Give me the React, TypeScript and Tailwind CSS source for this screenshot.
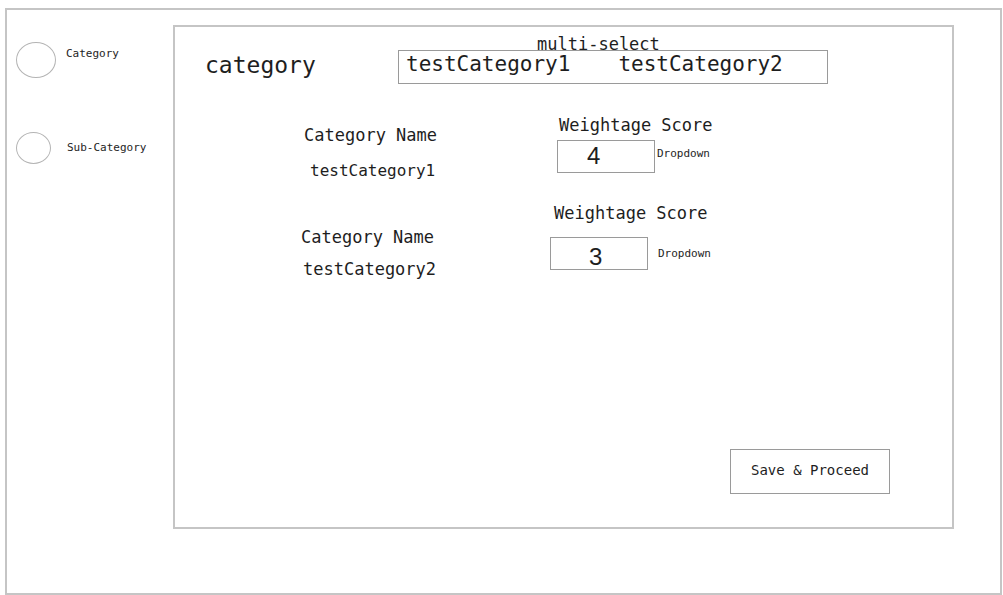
import { useState } from "react";

const SCORES = ["1", "2", "3", "4", "5"];

function ScoreSelect({
  id,
  initial,
  className,
}: {
  id: string;
  initial: string;
  className: string;
}) {
  const [value, setValue] = useState(initial);
  return (
    <select
      id={id}
      value={value}
      onChange={(event) => setValue(event.target.value)}
      className={`h-[33px] w-[98px] appearance-none border border-[#9a9a9a] bg-white font-['Liberation_Sans',sans-serif] text-[24px] leading-6 ${className}`}
    >
      {SCORES.map((score) => (
        <option key={score} value={score}>
          {score}
        </option>
      ))}
    </select>
  );
}

export default function App() {
  return (
    <div className="flex min-h-screen bg-white pt-2 pr-px pl-[5px] font-['DejaVu_Sans_Mono',monospace] text-[#1e1e1e]">
      <div className="flex flex-1 border-2 border-[#c5c5c5]">
        <nav className="flex w-[166px] shrink-0 flex-col pt-8 pl-[9px] text-[11px] leading-4">
          <a href="#category" className="flex items-start gap-2.5">
            <span className="h-9 w-10 rounded-[50%] border border-[#b4b4b4]" />
            <span className="pt-1">Category</span>
          </a>
          <a href="#sub-category" className="mt-[54px] flex items-center gap-4">
            <span className="h-8 w-[35px] rounded-[50%] border border-[#b4b4b4]" />
            <span>Sub-Category</span>
          </a>
        </nav>

        <main className="mt-[15px] mr-[46px] mb-16 flex flex-1 flex-col border-2 border-[#c5c5c5] pb-[33px]">
          <header className="flex pt-[11px] pl-[30px]">
            <h1 className="w-[193px] pt-[11px] text-[23px] leading-8">category</h1>
            <div className="w-[430px]">
              <div id="multi-label" className="pl-[139px] text-[17px] leading-3">
                multi-select
              </div>
              <div
                role="group"
                aria-labelledby="multi-label"
                className="flex h-[34px] items-start gap-12 border border-[#9a9a9a] pl-[7px] text-[21px] leading-[26px]"
              >
                <button type="button">testCategory1</button>
                <button type="button">testCategory2</button>
              </div>
            </div>
          </header>

          <section className="mt-[29px] flex pl-[129px]">
            <div className="flex w-[253px] flex-col gap-3 pt-2.5 leading-6">
              <h2 className="text-[17px]">Category Name</h2>
              <p className="pl-1.5 text-[16px]">testCategory1</p>
            </div>
            <div>
              <label htmlFor="score-1" className="block pb-[3px] pl-0.5 text-[17px] leading-6">
                Weightage Score
              </label>
              <div className="flex items-center gap-0.5">
                <ScoreSelect id="score-1" initial="4" className="pb-0.5 pl-[29px]" />
                <span className="pb-1.5 text-[11px] leading-4">Dropdown</span>
              </div>
            </div>
          </section>

          <section className="mt-[18px] flex pl-[126px]">
            <div className="flex w-[249px] flex-col gap-2 pt-6 leading-6">
              <h2 className="text-[17px]">Category Name</h2>
              <p className="pl-0.5 text-[17px]">testCategory2</p>
            </div>
            <div>
              <label htmlFor="score-2" className="block pb-3 pl-1 text-[17px] leading-6">
                Weightage Score
              </label>
              <div className="flex items-center gap-2.5">
                <ScoreSelect id="score-2" initial="3" className="pt-1.5 pl-[38px]" />
                <span className="text-[11px] leading-4">Dropdown</span>
              </div>
            </div>
          </section>

          <button
            type="button"
            className="mt-auto mr-[62px] h-[45px] w-40 self-end border border-[#9a9a9a] pb-1 text-[14px] leading-5"
          >
            Save &amp; Proceed
          </button>
        </main>
      </div>
    </div>
  );
}
